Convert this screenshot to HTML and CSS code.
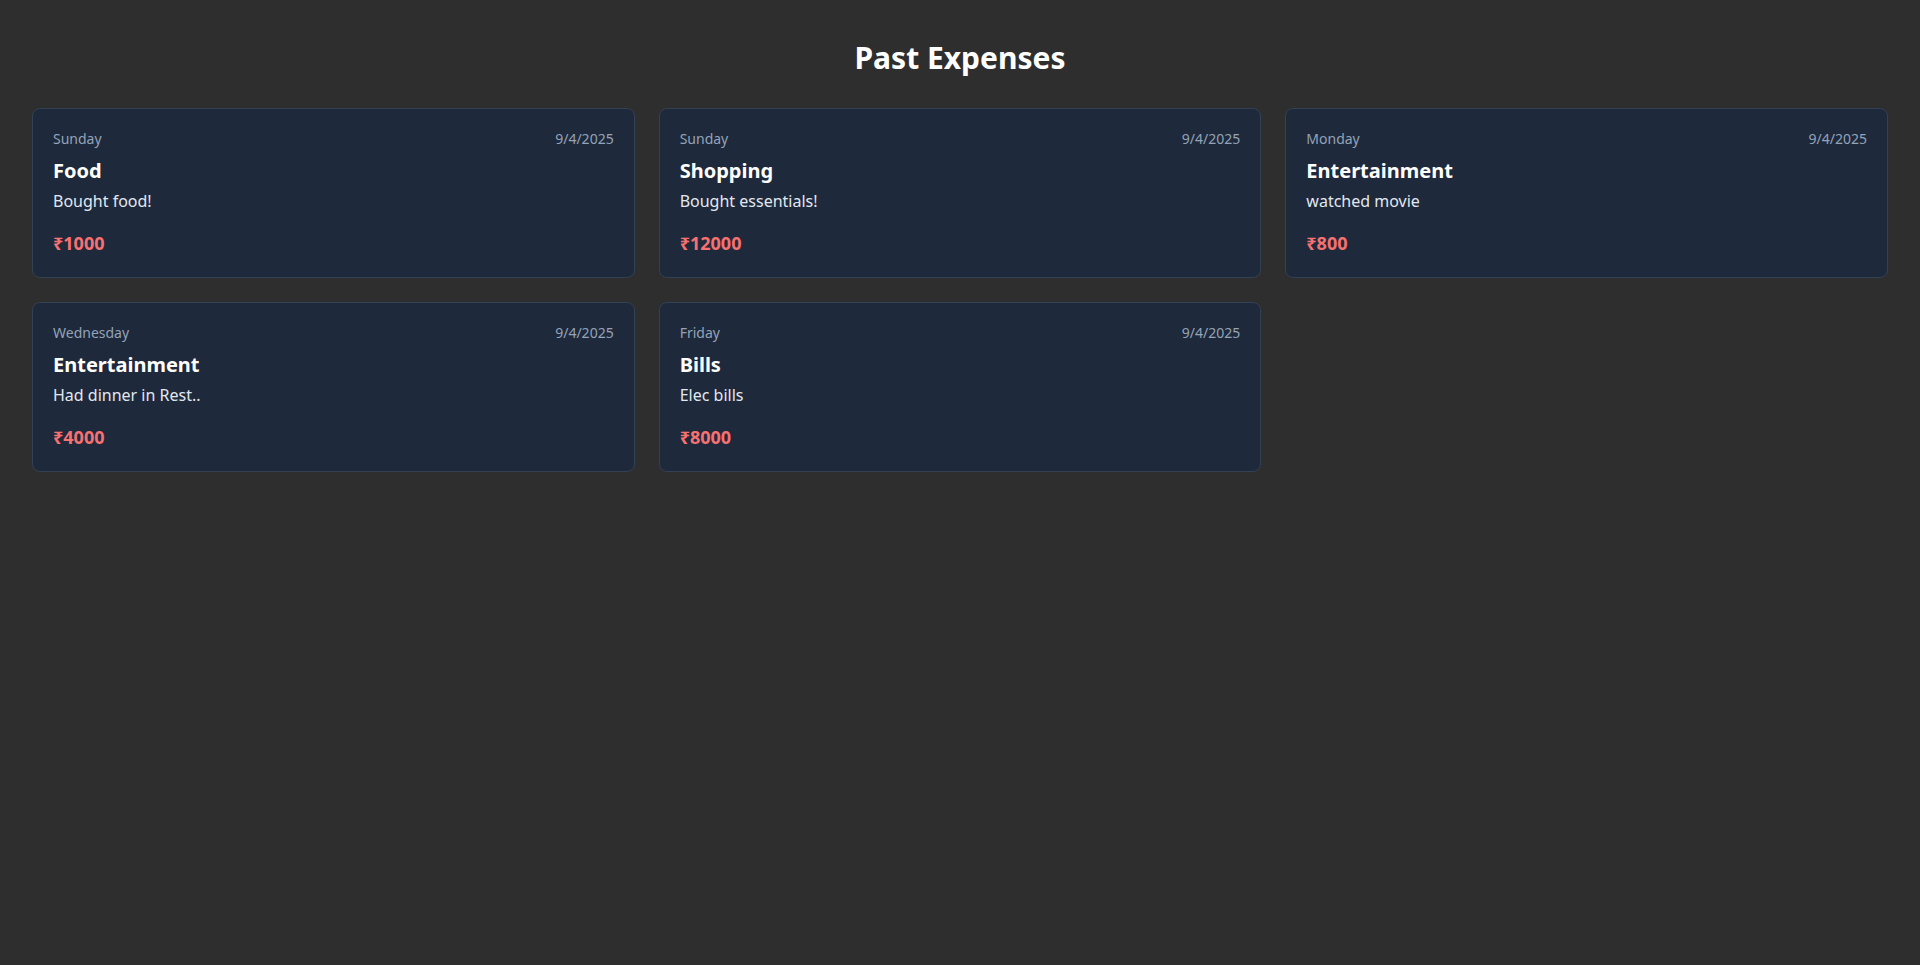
FILE: index.html
```html
<!DOCTYPE html>
<html lang="en">
<head>
<meta charset="utf-8">
<title>Past Expenses</title>
<link rel="stylesheet" href="styles.css">
</head>
<body>
<main class="page">
  <h1 class="page-title">Past Expenses</h1>
  <div class="expense-grid">
    <div class="card">
      <div class="card-head"><span class="day">Sunday</span><span class="date">9/4/2025</span></div>
      <h2 class="category">Food</h2>
      <p class="desc">Bought food!</p>
      <p class="amount">₹1000</p>
    </div>
    <div class="card">
      <div class="card-head"><span class="day">Sunday</span><span class="date">9/4/2025</span></div>
      <h2 class="category">Shopping</h2>
      <p class="desc">Bought essentials!</p>
      <p class="amount">₹12000</p>
    </div>
    <div class="card">
      <div class="card-head"><span class="day">Monday</span><span class="date">9/4/2025</span></div>
      <h2 class="category">Entertainment</h2>
      <p class="desc">watched movie</p>
      <p class="amount">₹800</p>
    </div>
    <div class="card">
      <div class="card-head"><span class="day">Wednesday</span><span class="date">9/4/2025</span></div>
      <h2 class="category">Entertainment</h2>
      <p class="desc">Had dinner in Rest..</p>
      <p class="amount">₹4000</p>
    </div>
    <div class="card">
      <div class="card-head"><span class="day">Friday</span><span class="date">9/4/2025</span></div>
      <h2 class="category">Bills</h2>
      <p class="desc">Elec bills</p>
      <p class="amount">₹8000</p>
    </div>
  </div>
</main>
</body>
</html>
```

FILE: styles.css
```css
* { box-sizing: border-box; }
html, body { margin: 0; padding: 0; }
body {
  background: #2e2e2e;
  color: #ffffff;
  font-family: "Noto Sans", "Open Sans", sans-serif;
  min-height: 100vh;
}
.page {
  padding: 32px;
}
.page-title {
  margin: 0 0 24px;
  font-size: 30px;
  line-height: 52px;
  font-weight: 700;
  text-align: center;
  color: #ffffff;
}
.expense-grid {
  display: grid;
  grid-template-columns: repeat(3, 1fr);
  gap: 24px;
}
.card {
  background: #1e293b;
  border: 1px solid #334155;
  border-radius: 8px;
  padding: 20px;
  display: flex;
  flex-direction: column;
}
.card-head {
  display: flex;
  justify-content: space-between;
  font-size: 14px;
  line-height: 19px;
  color: #94a3b8;
}
.category {
  margin: 8px 0 0;
  font-size: 20px;
  line-height: 30px;
  font-weight: 700;
  color: #ffffff;
}
.desc {
  margin: 3px 0 0;
  font-size: 16px;
  line-height: 24px;
  color: #e2e8f0;
}
.amount {
  margin: 17px 0 0;
  font-size: 18px;
  line-height: 27px;
  font-weight: 700;
  color: #f87171;
}
```
